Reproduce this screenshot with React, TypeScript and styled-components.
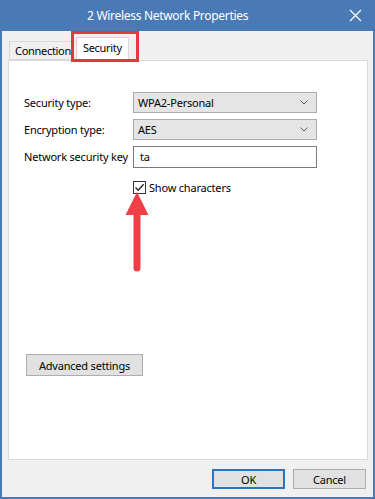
import React from "react";
import styled, { createGlobalStyle } from "styled-components";

const GlobalStyle = createGlobalStyle`
  html, body {
    margin: 0;
    padding: 0;
    background: #ffffff;
  }
  body {
    font-family: "Noto Sans", "Open Sans", sans-serif;
    font-size: 11px;
    letter-spacing: -0.2px;
    color: #000;
  }
`;

const Window = styled.div`
  width: 375px;
  height: 499px;
  box-sizing: border-box;
  display: flex;
  flex-direction: column;
  border: 2px solid #4a7ab5;
  border-top: none;
  background: #f0f0f0;
`;

const TitleBar = styled.div`
  height: 31px;
  flex-shrink: 0;
  display: flex;
  align-items: center;
  background: #4a7ab5;
  color: #fff;
  margin: 0 -2px;
  padding: 0 10px 0 87px;
  font-size: 12px;
  letter-spacing: -0.3px;
`;

const Title = styled.span`
  flex: 1;
`;

const CloseButton = styled.svg`
  width: 13px;
  height: 13px;
  margin-right: 3px;
`;

const Body = styled.div`
  flex: 1;
  display: flex;
  flex-direction: column;
  padding: 6px 5px 0 6px;
  min-height: 0;
`;

const TabStrip = styled.div`
  position: relative;
  height: 23px;
  display: flex;
  align-items: flex-end;
  padding-left: 1px;
`;

const Tab = styled.div<{ $active?: boolean }>`
  box-sizing: border-box;
  flex-shrink: 0;
  height: ${(p) => (p.$active ? "24px" : "19px")};
  padding: ${(p) => (p.$active ? "2px 6px 0 6px" : "1px 5px 0 5px")};
  margin-left: ${(p) => (p.$active ? "-1px" : "0")};
  margin-bottom: ${(p) => (p.$active ? "-1px" : "0")};
  background: ${(p) => (p.$active ? "#ffffff" : "#f0f0f0")};
  border: 1px solid #d9d9d9;
  border-bottom: ${(p) => (p.$active ? "none" : "1px solid #d9d9d9")};
  z-index: ${(p) => (p.$active ? 2 : 1)};
  line-height: 16px;
  letter-spacing: -0.3px;
  white-space: nowrap;
`;

const Highlight = styled.div`
  position: absolute;
  left: 63px;
  top: -6px;
  width: 68px;
  height: 31px;
  box-sizing: border-box;
  border: 3px solid #e03a40;
  z-index: 3;
  pointer-events: none;
`;

const Panel = styled.div`
  position: relative;
  flex: 1;
  background: #ffffff;
  border: 1px solid #d9d9d9;
  padding: 31px 0 0 15px;
  display: flex;
  flex-direction: column;
`;

const Form = styled.div`
  display: grid;
  grid-template-columns: 109px 184px;
  grid-auto-rows: 21px;
  row-gap: 6px;
  align-items: center;
`;

const Label = styled.span`
  white-space: nowrap;
`;

const Combo = styled.div`
  box-sizing: border-box;
  height: 21px;
  display: flex;
  align-items: center;
  justify-content: space-between;
  padding: 0 8px 0 4px;
  background: #e5e5e5;
  border: 1px solid #acacac;
`;

const Chevron = styled.svg`
  width: 8px;
  height: 5px;
`;

const TextInput = styled.div`
  box-sizing: border-box;
  height: 22px;
  display: flex;
  align-items: center;
  padding-left: 6px;
  background: #ffffff;
  border: 1px solid #7a7a7a;
`;

const CheckRow = styled.label`
  display: flex;
  align-items: center;
  gap: 3px;
  margin: 13px 0 0 109px;
`;

const CheckBox = styled.span`
  box-sizing: border-box;
  width: 13px;
  height: 13px;
  border: 1px solid #333333;
  background: #ffffff;
  display: flex;
  align-items: center;
  justify-content: center;
`;

const Arrow = styled.svg`
  position: absolute;
  left: 115px;
  top: 131px;
  width: 26px;
  height: 80px;
`;

const Button = styled.div<{ $default?: boolean; $width: number; $height: number }>`
  box-sizing: border-box;
  width: ${(p) => p.$width}px;
  height: ${(p) => p.$height}px;
  display: flex;
  align-items: center;
  justify-content: center;
  background: #e1e1e1;
  border: ${(p) => (p.$default ? "2px solid #2a74c4" : "1px solid #adadad")};
  white-space: nowrap;
`;

const AdvancedWrap = styled.div`
  margin-top: auto;
  margin-bottom: 83px;
  margin-left: 2px;
`;

const Footer = styled.div`
  height: 37px;
  display: flex;
  justify-content: flex-end;
  align-items: flex-start;
  gap: 8px;
  padding: 9px 2px 0 0;
  box-sizing: border-box;
  flex-shrink: 0;
`;

export default function App() {
  return (
    <>
      <GlobalStyle />
      <Window>
        <TitleBar>
          <Title>2 Wireless Network Properties</Title>
          <CloseButton viewBox="0 0 13 13">
            <path d="M1 1 L12 12 M12 1 L1 12" stroke="#ffffff" strokeWidth="1.2" fill="none" />
          </CloseButton>
        </TitleBar>
        <Body>
          <TabStrip>
            <Tab>Connection</Tab>
            <Tab $active>Security</Tab>
            <Highlight />
          </TabStrip>
          <Panel>
            <Form>
              <Label>Security type:</Label>
              <Combo>
                <span>WPA2-Personal</span>
                <Chevron viewBox="0 0 8 5">
                  <path d="M0.5 0.5 L4 4 L7.5 0.5" stroke="#555" strokeWidth="1" fill="none" />
                </Chevron>
              </Combo>
              <Label>Encryption type:</Label>
              <Combo>
                <span>AES</span>
                <Chevron viewBox="0 0 8 5">
                  <path d="M0.5 0.5 L4 4 L7.5 0.5" stroke="#555" strokeWidth="1" fill="none" />
                </Chevron>
              </Combo>
              <Label>Network security key</Label>
              <TextInput>ta</TextInput>
            </Form>
            <CheckRow>
              <CheckBox>
                <svg width="11" height="11" viewBox="0 0 11 11">
                  <path d="M1.5 5.5 L4.2 8.3 L9.6 2.2" stroke="#222" strokeWidth="1.3" fill="none" />
                </svg>
              </CheckBox>
              <span>Show characters</span>
            </CheckRow>
            <Arrow viewBox="0 0 26 80">
              <polygon points="13,0 24.5,23 1.5,23" fill="#ef4048" />
              <line x1="13" y1="20" x2="13" y2="76" stroke="#ef4048" strokeWidth="7" strokeLinecap="round" />
            </Arrow>
            <AdvancedWrap>
              <Button $width={117} $height={22}>Advanced settings</Button>
            </AdvancedWrap>
          </Panel>
          <Footer>
            <Button $default $width={73} $height={20}>OK</Button>
            <Button $width={73} $height={20}>Cancel</Button>
          </Footer>
        </Body>
      </Window>
    </>
  );
}
